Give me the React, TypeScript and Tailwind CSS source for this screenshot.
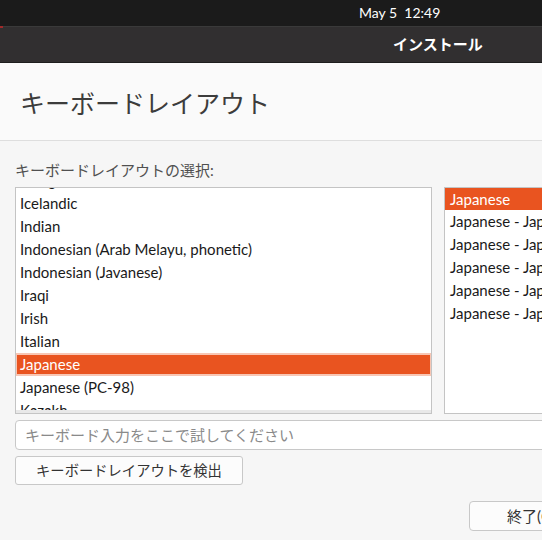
import React from "react";

const leftItems = [
  "Hungarian",
  "Icelandic",
  "Indian",
  "Indonesian (Arab Melayu, phonetic)",
  "Indonesian (Javanese)",
  "Iraqi",
  "Irish",
  "Italian",
  "Japanese",
  "Japanese (PC-98)",
  "Kazakh",
];

const rightItems = [
  "Japanese",
  "Japanese - Japanese (Dvorak)",
  "Japanese - Japanese (Kana)",
  "Japanese - Japanese (Kana 86)",
  "Japanese - Japanese (Macintosh)",
  "Japanese - Japanese (OADG 109A)",
];

const font = "font-['Lato','Noto_Sans_CJK_JP',sans-serif]";

export default function App() {
  return (
    <div className={`w-[542px] h-[540px] overflow-hidden flex flex-col bg-[#f6f6f6] ${font}`}>
      {/* top bar */}
      <div className="h-[26px] bg-[#1b1b1b] flex items-center shrink-0">
        <div className="ml-[359px] text-[14px] text-white leading-none whitespace-pre">May 5  12:49</div>
      </div>
      {/* title bar */}
      <div className="relative h-[37px] bg-[#312f30] border-t border-[#3a3a3a] border-b border-b-[#1e1e1e] flex items-center shrink-0">
        <div className="absolute left-0 top-[-1px] w-[3px] h-[2px] bg-[#a02a2a]" />
        <div className="ml-[393px] text-[15px] font-bold text-white leading-none">インストール</div>
      </div>
      {/* header */}
      <div className="h-[78px] bg-[#fafafa] border-b border-[#dedede] flex items-center shrink-0">
        <div className="ml-[20px] mt-[4px] text-[25px] text-[#3c3c3c] leading-none">キーボードレイアウト</div>
      </div>
      {/* body */}
      <div className="flex flex-col px-[15px] pt-[20px]">
        <div className="text-[15px] text-[#505050] leading-[18px] h-[18px]">キーボードレイアウトの選択:</div>
        <div className="mt-[8px] flex gap-[12px] h-[227px]">
          <div className="relative w-[417px] shrink-0 border border-[#c4c4c4] bg-white overflow-hidden">
            <div className="mt-[-19px] flex flex-col">
              {leftItems.map((it) =>
                it === "Japanese" ? (
                  <div key={it} className="h-[23px] bg-[#f8c6b4] pt-[2px] pb-[2px] pl-[1px] pr-[1px]">
                    <div className="h-full bg-[#e95420] text-white text-[15px] flex items-center pl-[3px]">{it}</div>
                  </div>
                ) : (
                  <div key={it} className="h-[23px] flex items-center pl-[4px] text-[15px] text-[#1a1a1a]">
                    {it}
                  </div>
                )
              )}
            </div>
            <div className="absolute left-0 right-0 bottom-0 h-[3px] bg-[#e8e8e8]" />
          </div>
          <div className="w-[260px] shrink-0 border border-[#c4c4c4] bg-white overflow-hidden">
            <div className="flex flex-col">
              {rightItems.map((it, i) => (
                <div
                  key={i}
                  className={
                    i === 0
                      ? "h-[22px] bg-[#e95420] text-white text-[15px] flex items-center pl-[5px] whitespace-nowrap"
                      : "h-[23px] text-[#1a1a1a] text-[15px] flex items-center pl-[5px] whitespace-nowrap"
                  }
                >
                  {it}
                </div>
              ))}
            </div>
          </div>
        </div>
        <div className="mt-[6px] h-[30px] w-[560px] shrink-0 rounded-[4px] border border-[#c8c8c8] bg-white flex items-center pl-[9px] text-[15px] text-[#8a8a8a]">
          キーボード入力をここで試してください
        </div>
        <div className="mt-[6px] flex">
          <div className="h-[29px] w-[228px] rounded-[3px] border border-[#c8c8c8] bg-[#fcfcfc] flex items-center justify-center text-[14.3px] text-[#333]">
            キーボードレイアウトを検出
          </div>
        </div>
        <div className="mt-[16px] flex">
          <div className="ml-[454px] h-[30px] w-[120px] shrink-0 rounded-[4px] border border-[#c8c8c8] bg-[#fcfcfc] flex items-center pl-[37px] text-[15px] text-[#333] whitespace-nowrap">
            終了(Q)
          </div>
        </div>
      </div>
    </div>
  );
}
